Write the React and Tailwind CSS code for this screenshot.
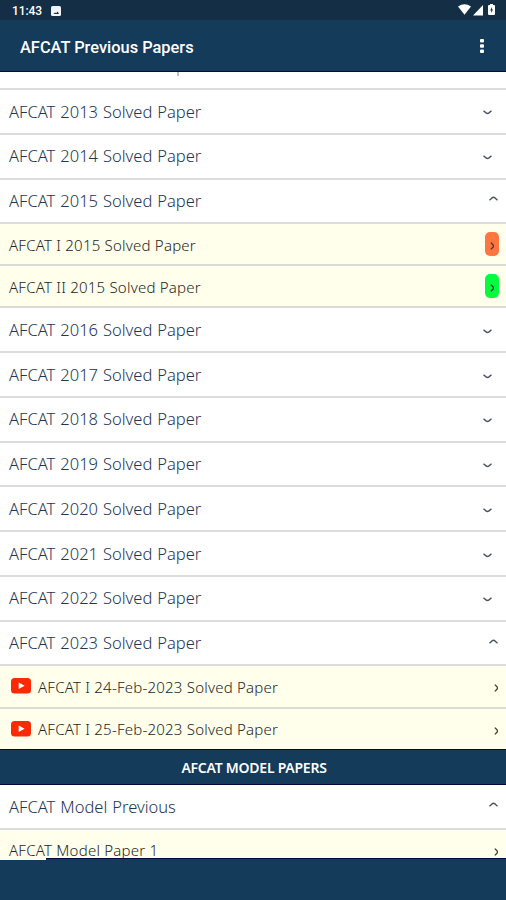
// App.jsx
import React from "react";

const solvedPapers = [
    { title: "AFCAT 2013 Solved Paper" },
    { title: "AFCAT 2014 Solved Paper" },
    {
        title: "AFCAT 2015 Solved Paper",
        items: [
            { title: "AFCAT I 2015 Solved Paper", badge: "bg-[#ff7640]" },
            { title: "AFCAT II 2015 Solved Paper", badge: "bg-[#06fb3f]" },
        ],
    },
    { title: "AFCAT 2016 Solved Paper" },
    { title: "AFCAT 2017 Solved Paper" },
    { title: "AFCAT 2018 Solved Paper" },
    { title: "AFCAT 2019 Solved Paper" },
    { title: "AFCAT 2020 Solved Paper" },
    { title: "AFCAT 2021 Solved Paper" },
    { title: "AFCAT 2022 Solved Paper" },
    {
        title: "AFCAT 2023 Solved Paper",
        items: [
            { title: "AFCAT I 24-Feb-2023 Solved Paper", video: true },
            { title: "AFCAT I 25-Feb-2023 Solved Paper", video: true },
        ],
    },
];

const modelPapers = [
    { title: "AFCAT Model Previous", items: [{ title: "AFCAT Model Paper 1" }] },
];

function Chevron({ open }) {
    return (
        <svg className={open ? "w-[9px] h-[5px] mr-2 mb-1" : "w-[9px] h-[5px] mr-[14px] -mb-[3px]"} viewBox="0 0 9 5" fill="none" stroke="#4b5262" strokeWidth="1.4">
            <path d={open ? "M0.5 4.2 L3 1.9 Q4.5 0.6 6 1.9 L8.5 4.2" : "M0.5 0.8 L3 2.9 Q4.5 4.1 6 2.9 L8.5 0.8"} />
        </svg>
    );
}

function Arrow() {
    return (
        <svg className="w-[5px] h-2" viewBox="0 0 5 8" fill="none" stroke="#3c3c32" strokeWidth="1.3">
            <path d="M0.8 0.6 L3 2.7 Q4 4 3 5.3 L0.8 7.4" />
        </svg>
    );
}

function YoutubeIcon() {
    return (
        <svg className="w-5 h-4 ml-[11px] mr-[7px]" viewBox="0 0 20 16">
            <rect width="20" height="15.5" rx="3.5" fill="#fb2a05" />
            <path d="M7.7 4.4 L13.6 7.7 L7.7 11 Z" fill="#fff" />
        </svg>
    );
}

function SubRow({ item }) {
    return (
        <div className="flex items-center h-[42.1px] shrink-0 bg-[#ffffeb] border-b-2 border-[#dcdcd6]">
            {item.video && <YoutubeIcon />}
            <span className={`flex-1 pt-px text-[15px] font-light tracking-[0.22px] text-[#26261f] whitespace-nowrap ${item.video ? "" : "pl-[9px]"}`}>{item.title}</span>
            {item.badge ? (
                <span className={`flex items-center justify-center w-[14px] h-6 mr-[7px] pt-1 rounded-[5px] ${item.badge}`}>
                    <Arrow />
                </span>
            ) : (
                <span className="mr-[7px] pt-1">
                    <Arrow />
                </span>
            )}
        </div>
    );
}

function Group({ group }) {
    return (
        <>
            <div className="flex items-center h-[44.75px] shrink-0 pl-[9px] bg-white border-b-2 border-[#dcdcdc]">
                <span className="flex-1 pt-px text-[16.5px] font-light [word-spacing:0.7px] text-[#243554] whitespace-nowrap">{group.title}</span>
                <Chevron open={Boolean(group.items)} />
            </div>
            {group.items?.map((item) => (
                <SubRow key={item.title} item={item} />
            ))}
        </>
    );
}

function StatusBar() {
    return (
        <div className="flex items-center h-5 shrink-0 pl-3 pr-[10px] bg-[#142e45] text-white font-[Roboto,sans-serif]">
            <span className="text-xs font-medium pt-0.5 tracking-[-0.1px]">11:43</span>
            <svg className="w-[10px] h-[10px] ml-[9px] mt-px" viewBox="0 0 10 10">
                <rect width="10" height="10" rx="1.5" fill="#f1f3f5" />
                <path d="M2.5 8 L4 6.4 L5.2 7.2 L6.6 5.6 L8 8 Z" fill="#142e45" />
            </svg>
            <svg className="w-[38px] h-3 ml-auto" viewBox="0 0 38 12" fill="#fff">
                <path d="M0 2.5 Q6.5 -1.8 13 2.5 L6.5 10.8 Z" />
                <path d="M25 1 V11.5 H15 Z" />
                <path d="M32 1 V0 H35 V1 H36 Q37 1 37 2 V10 Q37 11 36 11 H31 Q30 11 30 10 V2 Q30 1 31 1 Z" />
                <path d="M34 3 L32.2 6.5 H33.3 V9 L35 5.5 H34 Z" fill="#142e45" />
            </svg>
        </div>
    );
}

export default function App() {
    return (
        <div className="flex flex-col w-full h-[900px] overflow-hidden bg-[#153b5a] font-['Noto_Sans',sans-serif]">
            <StatusBar />

            {/* App bar */}
            <header className="flex items-center h-[52px] shrink-0 pl-5 pr-[22px] border-b border-[#08083f] text-white">
                <h1 className="flex-1 pt-[5px] text-[16.4px] font-medium font-[Roboto,sans-serif]">AFCAT Previous Papers</h1>
                <svg className="w-1 h-[14px] mt-px" viewBox="0 0 4 14" fill="#fff">
                    <rect width="4" height="3.6" rx="1" />
                    <rect y="5.2" width="4" height="3.6" rx="1" />
                    <rect y="10.4" width="4" height="3.6" rx="1" />
                </svg>
            </header>

            {/* Scrolled list */}
            <main className="flex flex-col h-[786px] shrink-0 overflow-hidden bg-white">
                {/* Bottom edge of the row above, only a descender shows */}
                <div className="h-[18px] shrink-0 pl-[177px] border-b-2 border-[#dcdcdc]">
                    <div className="w-[2px] h-1 bg-[#b9bec8]" />
                </div>
                {solvedPapers.map((group) => (
                    <Group key={group.title} group={group} />
                ))}
                <h2 className="flex items-center justify-center h-9 shrink-0 -mt-[1.5px] pl-0.5 border-y border-[#08083f] bg-[#153b5a] text-white text-sm font-semibold tracking-[-0.25px]">
                    <span className="pt-0.5">AFCAT MODEL PAPERS</span>
                </h2>
                {modelPapers.map((group) => (
                    <Group key={group.title} group={group} />
                ))}
            </main>

            <footer className="flex-1 border-t border-[#08083f]">
                <div className="w-[46px] h-0.5 -mt-px bg-[#ffffeb]" />
            </footer>
        </div>
    );
}
